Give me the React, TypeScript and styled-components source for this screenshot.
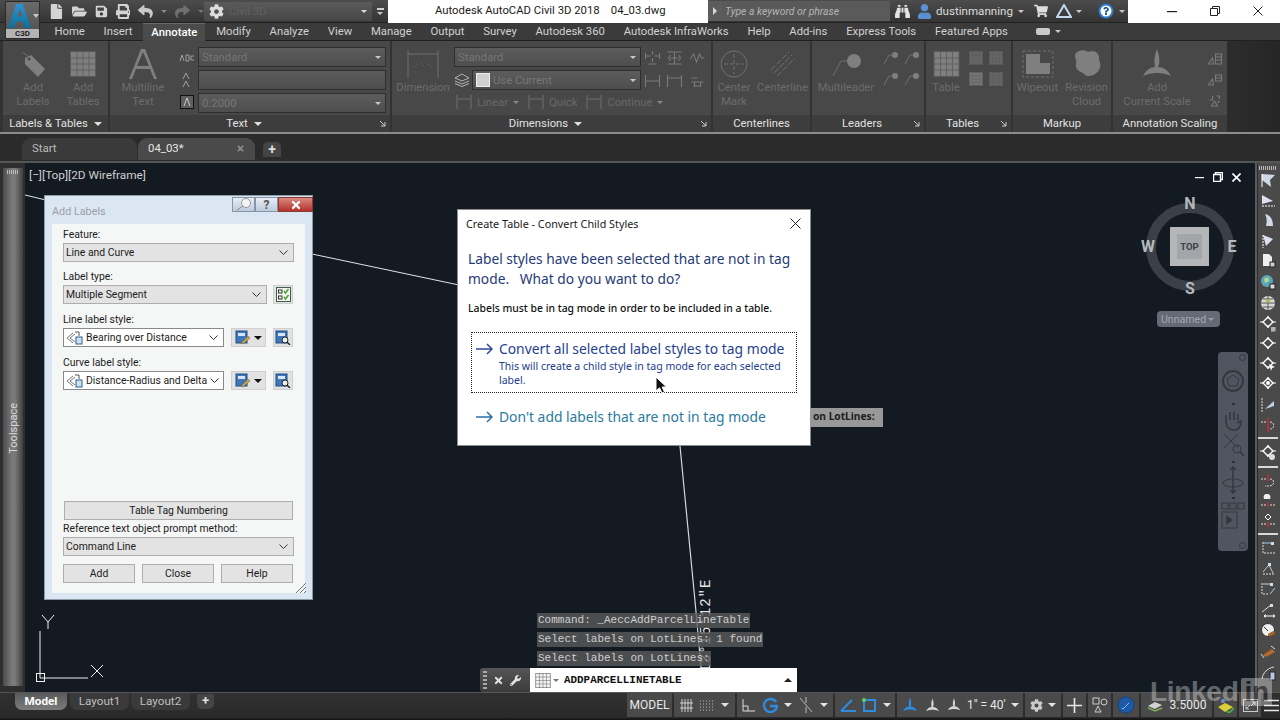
import React from "react";
import styled, { createGlobalStyle } from "styled-components";
import {
  FaBinoculars,
  FaCog,
  FaFile,
  FaFolderOpen,
  FaPrint,
  FaQuestion,
  FaReply,
  FaSave,
  FaShare,
  FaShoppingCart,
  FaTimes,
  FaUser,
  FaWrench,
} from "react-icons/fa";

const UI_FONT = `Roboto, "Open Sans", "Liberation Sans", sans-serif`;
const DLG_FONT = `"Noto Sans", "Open Sans", "Liberation Sans", sans-serif`;
const MONO_FONT = `"Liberation Mono", "DejaVu Sans Mono", monospace`;

const GlobalStyle = createGlobalStyle`
  html, body { margin: 0; padding: 0; background: #2c2c2c; }
  * { box-sizing: border-box; }
  #root { width: 1280px; height: 720px; overflow: hidden; }
`;

const Page = styled.div`
  position: relative;
  width: 1280px;
  height: 720px;
  display: flex;
  flex-direction: column;
  overflow: hidden;
  background: #2c2c2c;
  font-family: ${UI_FONT};
`;

/* ---------- title bar ---------- */

const TitleBar = styled.div`
  height: 23px;
  display: flex;
  align-items: stretch;
  background: linear-gradient(#4c4c4c, #343434);
  border-bottom: 1px solid #222;
`;

const Qat = styled.div`
  width: 204px;
  padding-left: 49px;
  display: flex;
  align-items: center;
  gap: 8px;
  color: #d4d4d4;
  font-size: 15px;
`;

const TinyCaret = styled.span<{ $c?: string }>`
  display: inline-block;
  flex: none;
  width: 0;
  height: 0;
  border-left: 3px solid transparent;
  border-right: 3px solid transparent;
  border-top: 3px solid ${(p) => p.$c || "#c8c8c8"};
`;

const WorkspaceCombo = styled.div`
  width: 168px;
  margin: 2px 0 1px;
  display: flex;
  align-items: center;
  gap: 5px;
  padding: 0 5px;
  background: linear-gradient(#5a5a5a, #474747);
  color: #616161;
  font-size: 11.3px;
  svg { color: #dcdcdc; font-size: 15px; }
  span:last-child { margin-left: auto; }
`;

const QatMenu = styled.div`
  width: 16px;
  display: flex;
  flex-direction: column;
  align-items: center;
  justify-content: center;
  gap: 2px;
  i { width: 7px; height: 2px; background: #cfcfcf; }
`;

const WhiteTitle = styled.div`
  width: 320px;
  margin-bottom: -1px;
  background: #fff;
  color: #1a1a1a;
  font-size: 11.3px;
  line-height: 22px;
  padding-left: 47px;
  white-space: pre;
`;

const SearchArrow = styled.div`
  width: 14px;
  margin: 1px 0;
  background: #5c5c5c;
  display: flex;
  align-items: center;
  justify-content: center;
  i {
    width: 0;
    height: 0;
    border-top: 4px solid transparent;
    border-bottom: 4px solid transparent;
    border-left: 4px solid #d5d5d5;
  }
`;

const SearchBox = styled.div`
  width: 168px;
  margin: 1px 0;
  background: #5a5a5a;
  color: #b4b4b4;
  font-size: 10.4px;
  font-style: italic;
  line-height: 21px;
  padding-left: 3px;
`;

const InfoCenter = styled.div`
  width: 238px;
  display: flex;
  align-items: center;
  padding-left: 5px;
  color: #dcdcdc;
  font-size: 12px;
`;

const InfoName = styled.span`
  margin: 0 5px 0 4px;
  font-size: 11.6px;
`;

const WindowBtns = styled.div`
  flex: 1;
  margin-bottom: -1px;
  background: #fff;
  display: flex;
  align-items: center;
  justify-content: flex-end;
  gap: 33px;
  padding: 0 17px 1px 0;
`;

const AppButton = styled.div`
  position: absolute;
  left: 5px;
  top: 1px;
  width: 35px;
  height: 38px;
  background: linear-gradient(#6a6a6a, #4e4e4e);
  border: 1px solid #2a2a2a;
  border-radius: 1px;
  display: flex;
  flex-direction: column;
`;

const AppLogoWrap = styled.div`
  flex: 1;
  display: flex;
  align-items: center;
  padding-left: 1px;
  gap: 0;
`;

const AppTag = styled.div`
  height: 9px;
  background: #b4b4b4;
  color: #222;
  font-size: 8px;
  font-weight: 700;
  line-height: 9px;
  text-align: center;
`;

/* ---------- ribbon ---------- */

const TabRow = styled.div`
  height: 18px;
  display: flex;
  padding-left: 45px;
  background: #3b3b3b;
  border-bottom: 1px solid #202020;
`;

const RibbonTab = styled.div<{ $active?: boolean }>`
  height: 18px;
  padding: 0 ${(p) => (p.$active ? "8px" : "9.4px")};
  margin: ${(p) => (p.$active ? "0 1.4px" : "0")};
  font-size: 11.3px;
  line-height: 18px;
  color: ${(p) => (p.$active ? "#fff" : "#d2d2d2")};
  font-weight: ${(p) => (p.$active ? 500 : 400)};
  background: ${(p) => (p.$active ? "#4b4b4b" : "transparent")};
  border-top: ${(p) => (p.$active ? "1px solid #6a6a6a" : "none")};
  white-space: nowrap;
`;

const TabExtra = styled.div`
  margin-left: 19px;
  display: flex;
  align-items: center;
  gap: 5px;
  i {
    display: block;
    width: 14px;
    height: 7px;
    background: #c8c8c8;
    border-radius: 2px;
  }
`;

const RibbonRow = styled.div`
  height: 93px;
  display: flex;
  gap: 2px;
  padding-left: 3px;
  background: linear-gradient(90deg, #333 0, #333 92%, #262626 100%);
  border-bottom: 2px solid #8b8b8b;
`;

const PanelBox = styled.div<{ $w: number }>`
  width: ${(p) => p.$w}px;
  flex: none;
  display: flex;
  flex-direction: column;
  background: #484848;
`;

const PanelBody = styled.div`
  flex: 1;
  display: flex;
  min-height: 0;
`;

const PanelFooter = styled.div<{ $launcher?: boolean }>`
  position: relative;
  height: 17px;
  flex: none;
  display: flex;
  align-items: center;
  justify-content: center;
  gap: 6px;
  padding-right: ${(p) => (p.$launcher ? 12 : 0)}px;
  background: #3d3d3d;
  color: #e2e2e2;
  font-size: 11.3px;
`;

const FootCaret = styled.span`
  width: 0;
  height: 0;
  border-left: 4px solid transparent;
  border-right: 4px solid transparent;
  border-top: 4px solid #ddd;
`;

const Launcher = styled.svg`
  position: absolute;
  right: 4px;
  top: 6px;
  width: 6px;
  height: 6px;
`;

const BigTool = styled.div<{ $w: number; $ml?: number }>`
  width: ${(p) => p.$w}px;
  margin-left: ${(p) => p.$ml || 0}px;
  flex: none;
  display: flex;
  flex-direction: column;
  align-items: center;
  padding-top: 7px;
  color: #6c6c6c;
  font-size: 11.3px;
  line-height: 14px;
  text-align: center;
`;

const BigIcon = styled.div`
  height: 32px;
  margin-bottom: 1px;
  display: flex;
  align-items: center;
  justify-content: center;
`;

const SmallGrid = styled.div<{ $cols: number; $w: number; $gap?: number }>`
  width: ${(p) => p.$w}px;
  flex: none;
  display: grid;
  grid-template-columns: repeat(${(p) => p.$cols}, 1fr);
  grid-auto-rows: 20px;
  row-gap: ${(p) => p.$gap ?? 1}px;
  justify-items: center;
  align-items: center;
  padding-top: 7px;
  align-self: flex-start;
`;

const ComboStack = styled.div<{ $w: number }>`
  width: ${(p) => p.$w}px;
  flex: none;
  display: flex;
  flex-direction: column;
  gap: 3px;
  padding-top: 6px;
`;

const DimColumn = styled.div`
  width: 187px;
  flex: none;
`;

const RibbonCombo = styled.div<{ $ml?: number }>`
  height: 20px;
  margin-left: ${(p) => p.$ml || 0}px;
  display: flex;
  align-items: center;
  padding: 0 4px 0 3px;
  background: linear-gradient(#5c5c5c, #4e4e4e);
  border: 1px solid #2e2e2e;
  color: #767676;
  font-size: 11.3px;
  span:last-child { margin-left: auto; }
`;

const ComboRow = styled.div`
  display: flex;
  align-items: center;
  gap: 2px;
  > div:last-child { flex: 1; }
`;

const Swatch = styled.i`
  width: 14px;
  height: 14px;
  margin-right: 3px;
  background: #cfcfcf;
  border: 1px solid #eee;
`;

const DimRow = styled.div`
  height: 20px;
  margin-top: 2px;
  display: flex;
  align-items: center;
  padding-left: 2px;
  color: #686868;
  font-size: 11.3px;
  white-space: nowrap;
`;

const DimItem = styled.span`
  display: inline-flex;
  align-items: center;
  gap: 5px;
  margin-right: 9px;
`;

/* ---------- file tabs ---------- */

const FileTabRow = styled.div`
  height: 29px;
  display: flex;
  align-items: flex-end;
  gap: 1px;
  padding: 0 0 1px 22px;
  background: #2b2b2b;
  border-bottom: 2px solid #555;
`;

const FileTab = styled.div<{ $active?: boolean }>`
  width: ${(p) => (p.$active ? 117 : 115)}px;
  height: 22px;
  display: flex;
  align-items: center;
  justify-content: space-between;
  padding: 0 10px 2px;
  background: ${(p) => (p.$active ? "#4a4a4a" : "#3a3a3a")};
  border-radius: 9px 9px 0 0;
  color: ${(p) => (p.$active ? "#e6e6e6" : "#bbb")};
  font-size: 11.4px;
  svg { color: #8c8c8c; font-size: 9px; }
`;

const AddTab = styled.div`
  width: 18px;
  height: 15px;
  margin: 0 0 3px 7px;
  border-radius: 5px 5px 0 0;
  background: #444;
  color: #ddd;
  font-size: 14px;
  font-weight: 700;
  line-height: 14px;
  text-align: center;
`;

/* ---------- workspace ---------- */

const Workspace = styled.div`
  flex: 1;
  min-height: 0;
  display: flex;
`;

const ToolSpaceBar = styled.div`
  width: 25px;
  flex: none;
  padding: 5px 2px 6px 3px;
  background: #2e2e2e;
  display: flex;
`;

const ToolSpaceStrip = styled.div`
  flex: 1;
  display: flex;
  flex-direction: column;
  align-items: center;
  background: linear-gradient(90deg, #4b4b4b, #7a7a7a 45%, #7a7a7a 60%, #3f3f3f);
`;

const GripDots = styled.div<{ $w: number }>`
  width: ${(p) => p.$w}px;
  height: 4px;
  margin-top: 2px;
  flex: none;
  background: repeating-linear-gradient(90deg, #bbb 0 1px, transparent 1px 2px);
`;

const ToolSpaceLabel = styled.div`
  margin-top: 229px;
  writing-mode: vertical-rl;
  transform: rotate(180deg);
  color: #d8d8d8;
  font-size: 11px;
`;

const Canvas = styled.div`
  position: relative;
  flex: 1;
  background: #131a22;
  overflow: hidden;
`;

const CadLayer = styled.svg`
  position: absolute;
  left: 0;
  top: 0;
`;

const ViewLabel = styled.div`
  position: absolute;
  left: 4px;
  top: 5px;
  color: #cfcfcf;
  font-size: 11.8px;
`;

const ViewportBtns = styled.div`
  position: absolute;
  right: 14px;
  top: 9px;
  display: flex;
  gap: 9px;
  align-items: center;
`;

const ViewCube = styled.div`
  position: absolute;
  left: 1118px;
  top: 34px;
  width: 94px;
  height: 94px;
`;

const CubeFace = styled.div`
  position: absolute;
  left: 27px;
  top: 30px;
  width: 39px;
  height: 39px;
  padding: 7px;
  background: #b4b6b8;
`;

const CubeInner = styled.div`
  width: 25px;
  height: 25px;
  background: #a2a6a9;
  color: #3b4048;
  font-size: 9.5px;
  font-weight: 700;
  line-height: 25px;
  text-align: center;
`;

const Compass = styled.span<{ $x: number; $y: number }>`
  position: absolute;
  left: ${(p) => p.$x}px;
  top: ${(p) => p.$y}px;
  width: 18px;
  color: #b6b9bc;
  font-size: 16px;
  font-weight: 700;
  line-height: 16px;
  text-align: center;
`;

const UnnamedPill = styled.div`
  position: absolute;
  left: 1132px;
  top: 148px;
  width: 63px;
  height: 16px;
  display: flex;
  align-items: center;
  justify-content: space-between;
  padding: 0 6px 0 4px;
  background: #666a75;
  border-radius: 4px;
  color: #a3a7b0;
  font-size: 10.6px;
`;

const NavBar = styled.div`
  position: absolute;
  left: 1193px;
  top: 189px;
  width: 30px;
  height: 199px;
  display: flex;
  flex-direction: column;
  align-items: center;
  padding: 14px 0 4px;
  background: #50565f;
  border-radius: 4px;
`;

const NavDot = styled.i`
  width: 3px;
  height: 2px;
  margin: 3px 0;
  background: #2c3037;
`;

const NavCorner = styled.i<{ $bottom?: boolean }>`
  position: absolute;
  right: 2px;
  ${(p) => (p.$bottom ? "bottom: 2px;" : "top: 2px;")}
  width: 7px;
  height: 7px;
  border: 1px solid #33383f;
  border-radius: 50%;
`;

/* ---------- Add Labels dialog ---------- */

const AddLabelsWindow = styled.div`
  position: absolute;
  left: 20px;
  top: 33px;
  width: 267px;
  height: 403px;
  display: flex;
  flex-direction: column;
  background: #dbe6f3;
  box-shadow: 0 0 0 1px #8e9aa6;
  font-family: ${UI_FONT};
  font-size: 10.4px;
  color: #1c1c1c;
`;

const AddLabelsTitle = styled.div`
  height: 28px;
  flex: none;
  padding: 9px 0 0 7px;
  color: #9b9fa5;
  font-size: 10.8px;
`;

const CaptionBtns = styled.div`
  position: absolute;
  right: -1px;
  top: 1px;
  height: 15px;
  display: flex;
`;

const CaptionBtn = styled.div<{ $w: number; $close?: boolean }>`
  width: ${(p) => p.$w}px;
  display: flex;
  align-items: center;
  justify-content: center;
  background: ${(p) => (p.$close ? "linear-gradient(#d98a80, #b5322a)" : "linear-gradient(#e7eef6, #bccbdb)")};
  border: 1px solid ${(p) => (p.$close ? "#8a3a34" : "#8796a6")};
  color: ${(p) => (p.$close ? "#fff" : "#555")};
  font-size: 12px;
  font-weight: 700;
`;

const AddLabelsBody = styled.div`
  flex: 1;
  margin: 0 7px 6px;
  padding: 3px 11px 10px 11px;
  background: #f5f6f6;
  display: flex;
  flex-direction: column;
`;

const FieldLabel = styled.div<{ $mt?: number }>`
  height: 15px;
  line-height: 15px;
  margin-top: ${(p) => p.$mt ?? 0}px;
  white-space: nowrap;
`;

const DlgRow = styled.div`
  height: 19px;
  margin-top: 1px;
  display: flex;
  align-items: stretch;
`;

const DlgSelect = styled.div<{ $w?: number; $white?: boolean }>`
  width: ${(p) => (p.$w ? `${p.$w}px` : "100%")};
  flex: none;
  display: flex;
  align-items: center;
  padding: 0 5px 0 2px;
  gap: 3px;
  background: ${(p) => (p.$white ? "#fff" : "#e3e3e3")};
  border: 1px solid ${(p) => (p.$white ? "#8a8a8a" : "#adadad")};
  white-space: nowrap;
  overflow: hidden;
  svg { flex: none; }
  svg:last-child { margin-left: auto; }
`;

const DlgIconBtn = styled.div<{ $w?: number; $ml: number }>`
  width: ${(p) => p.$w || 20}px;
  margin-left: ${(p) => p.$ml}px;
  flex: none;
  display: flex;
  align-items: center;
  justify-content: center;
  gap: 3px;
  background: #e2e2e2;
  border: 1px solid #cfcfcf;
`;

const DlgCaretDark = styled.i`
  width: 0;
  height: 0;
  border-left: 4px solid transparent;
  border-right: 4px solid transparent;
  border-top: 4px solid #111;
`;

const TagButton = styled.div`
  height: 19px;
  margin: auto 1px 0 1px;
  background: #e3e3e3;
  border: 1px solid #adadad;
  line-height: 17px;
  text-align: center;
`;

const DlgButtons = styled.div`
  margin-top: 8px;
  display: flex;
  gap: 7px;
`;

const DlgButton = styled.div`
  width: 72px;
  height: 19px;
  background: #e3e3e3;
  border: 1px solid #adadad;
  line-height: 17px;
  text-align: center;
`;

const ResizeGrip = styled.svg`
  position: absolute;
  right: 6px;
  bottom: 6px;
`;

/* ---------- Create Table dialog ---------- */

const TaskDialog = styled.div`
  position: absolute;
  left: 433px;
  top: 47px;
  width: 352px;
  height: 235px;
  background: #fff;
  box-shadow: 0 0 0 1px #8c8c8c;
  font-family: ${DLG_FONT};
`;

const TaskTitle = styled.div`
  height: 30px;
  padding: 6px 0 0 8px;
  color: #1a1a1a;
  font-size: 10.8px;
`;

const TaskClose = styled.svg`
  position: absolute;
  right: 9px;
  top: 8px;
`;

const TaskHeading = styled.div`
  margin: 9px 10px 0;
  color: #1f3a78;
  font-size: 13.75px;
  line-height: 20px;
  white-space: pre;
`;

const TaskText = styled.div`
  margin: 11px 10px 0;
  color: #111;
  font-size: 10.4px;
  font-weight: 500;
  line-height: 16px;
`;

const CommandLink = styled.div<{ $focus?: boolean }>`
  display: flex;
  gap: 6px;
  margin: ${(p) => (p.$focus ? "16px 13px 0" : "9px 13px 0")};
  padding: ${(p) => (p.$focus ? "6px 4px 2px" : "4px 4px")};
  min-height: ${(p) => (p.$focus ? "61px" : "auto")};
  border: 1px ${(p) => (p.$focus ? "dotted #222" : "solid transparent")};
`;

const LinkTitle = styled.div<{ $c: string }>`
  color: ${(p) => p.$c};
  font-size: 13.85px;
  line-height: 20px;
  white-space: nowrap;
`;

const LinkSub = styled.div`
  color: #23408e;
  font-size: 10.5px;
  line-height: 14px;
`;

const ArrowBox = styled.svg`
  flex: none;
  margin-top: 4px;
`;

const Pointer = styled.svg`
  position: absolute;
  left: 630px;
  top: 213px;
`;

const OnLotLines = styled.div`
  position: absolute;
  left: 785px;
  top: 245px;
  width: 73px;
  height: 19px;
  padding-left: 3px;
  background: #989898;
  color: #1d1d1d;
  font-family: ${DLG_FONT};
  font-size: 10.2px;
  font-weight: 700;
  line-height: 16px;
`;

/* ---------- command line ---------- */

const BearingText = styled.div`
  position: absolute;
  left: 673px;
  top: 519px;
  transform: rotate(-90deg);
  transform-origin: left top;
  color: #e6e6e6;
  font-family: ${MONO_FONT};
  font-size: 14px;
  line-height: 16px;
  letter-spacing: 1px;
  white-space: pre;
`;

const History = styled.div`
  position: absolute;
  left: 512px;
  top: 450px;
  display: flex;
  flex-direction: column;
  align-items: flex-start;
  gap: 4px;
`;

const HistoryLine = styled.div`
  height: 15px;
  padding: 0 1px;
  background: rgba(92, 92, 92, 0.78);
  color: #cfcfcf;
  font-family: ${MONO_FONT};
  font-size: 11px;
  line-height: 15px;
  white-space: pre;
`;

const CommandBar = styled.div`
  position: absolute;
  left: 455px;
  top: 505px;
  width: 317px;
  height: 24px;
  display: flex;
`;

const CommandTools = styled.div`
  width: 50px;
  display: flex;
  align-items: center;
  gap: 6px;
  padding-left: 3px;
  background: linear-gradient(#555, #3c3c3c);
  border-radius: 3px 0 0 3px;
  color: #e4e4e4;
  font-size: 11px;
`;

const CommandGrip = styled.i`
  width: 4px;
  height: 18px;
  background: repeating-linear-gradient(#aaa 0 2px, transparent 2px 4px);
`;

const CommandInput = styled.div`
  flex: 1;
  display: flex;
  align-items: center;
  padding: 0 4px 0 5px;
  background: #fff;
  color: #111;
  font-family: ${MONO_FONT};
  font-size: 10.9px;
  font-weight: 700;
`;

const CommandText = styled.span`
  margin: 0 auto 0 5px;
`;

const UpCaret = styled.i`
  width: 0;
  height: 0;
  margin-right: 1px;
  border-left: 4px solid transparent;
  border-right: 4px solid transparent;
  border-bottom: 4px solid #222;
`;

/* ---------- right tool bar ---------- */

const RightBar = styled.div`
  width: 25px;
  flex: none;
  display: flex;
  flex-direction: column;
  align-items: center;
  padding: 1px 1px 0 0;
  background: #4a4a4a;
  border-left: 2px solid #5a5a5a;
  box-shadow: inset 1px 0 0 #2c2c2c;
`;

const RightSlot = styled.div<{ $h: number }>`
  height: ${(p) => p.$h}px;
  flex: none;
  display: flex;
  align-items: center;
  justify-content: center;
`;

const RightSep = styled.div`
  width: 20px;
  height: 2px;
  flex: none;
  margin: 3px 0;
  background: #d8d8d8;
`;

/* ---------- status bar ---------- */

const StatusBar = styled.div`
  height: 28px;
  flex: none;
  display: flex;
  align-items: flex-start;
  background: linear-gradient(#303030, #2a2a2a 90%, #111);
  border-top: 1px solid #555;
`;

const LayoutTabs = styled.div`
  width: 627px;
  flex: none;
  display: flex;
  align-items: center;
  padding: 0 0 0 15px;
  height: 17px;
`;

const LayoutTab = styled.div<{ $active?: boolean }>`
  width: ${(p) => (p.$active ? 52 : 59)}px;
  height: 17px;
  margin-right: ${(p) => (p.$active ? 3 : 2)}px;
  background: ${(p) => (p.$active ? "linear-gradient(#5a5a5a, #7c7c7c)" : "#3a3a3a")};
  border-radius: 0 0 7px 7px;
  color: ${(p) => (p.$active ? "#fff" : "#bfbfbf")};
  font-size: 11.7px;
  font-weight: ${(p) => (p.$active ? 700 : 400)};
  line-height: 16px;
  text-align: center;
`;

const AddLayout = styled.div`
  width: 17px;
  height: 15px;
  margin-left: 5px;
  border-radius: 0 0 5px 5px;
  background: #444;
  color: #e0e0e0;
  font-size: 13px;
  font-weight: 700;
  line-height: 13px;
  text-align: center;
`;

const StatusGroup = styled.div<{ $w: number }>`
  width: ${(p) => p.$w}px;
  height: 24px;
  flex: none;
  margin-right: 2px;
  display: flex;
  align-items: center;
  justify-content: space-around;
  padding: 0 2px;
  background: #4a4a4a;
  color: #e8e8e8;
  font-size: 12px;
  white-space: nowrap;
`;

const StatusCaret = styled.i`
  width: 0;
  height: 0;
  border-left: 4px solid transparent;
  border-right: 4px solid transparent;
  border-top: 4px solid #e4e4e4;
`;

const Watermark = styled.div`
  position: absolute;
  left: 1150px;
  top: 678px;
  display: flex;
  align-items: center;
  gap: 3px;
  opacity: 0.33;
  color: #fff;
  font-family: "Liberation Sans", sans-serif;
  font-size: 28px;
  font-weight: 700;
  line-height: 28px;
  letter-spacing: -0.3px;
  pointer-events: none;
`;

const WatermarkIn = styled.span`
  padding: 0 3px;
  background: #fff;
  color: #333;
  border-radius: 2px;
`;

/* ---------- drawings ---------- */

const G = "#6f6f6f";
const G2 = "#7f7f7f";

const TagIcon = () => (
  <svg width="28" height="30" viewBox="0 0 28 30">
    <path d="M3 3l6 4" stroke={G} fill="none" />
    <path d="M6 9l6-3 14 14-7 8L6 15z" fill={G2} />
    <circle cx="10" cy="10" r="1.5" fill="#484848" />
  </svg>
);

const GridIcon = ({ w = 26, h = 26, c = G2 }: { w?: number; h?: number; c?: string }) => (
  <svg width={w} height={h} viewBox="0 0 26 26">
    <rect x="0.5" y="0.5" width="25" height="25" fill={c} stroke="#5a5a5a" />
    <path d="M0 7h26M0 13h26M0 19h26M7 0v26M13 0v26M19 0v26" stroke="#5a5a5a" strokeWidth="0.8" />
  </svg>
);

const dimGlyphs = [
  "M1 6h5M10 6h5M8 1v4M8 8v4M1 3v6M15 3v6M4 14h8",
  "M1 2h14M1 14h14M4 8h8M8 2v12M4 5l-2 3 2 3M12 5l2 3-2 3",
  "M1 9l3-5 3 8 3-8 2 4h3",
  "M1 2v12M15 2v12M1 8h14",
  "M1 2v12M15 2v12M1 5h14",
  "M2 5h6M2 9h12M4 13h8M5 9v5M11 9v5",
];

const DimGlyph = ({ kind }: { kind: number }) => (
  <svg width="17" height="16" viewBox="0 0 16 16">
    <path d={dimGlyphs[kind]} fill="none" stroke="#7a7a7a" strokeWidth="1.1" />
  </svg>
);

const ScaleGlyph = ({ kind }: { kind: number }) => {
  const p = ["M2 14l4-6 1 6zM9 4h6v10H9zM9 7h6M9 10h6", "M2 14l4-6 1 6zM9 4h6v6H9zM9 7h6", "M3 8h3V4M10 4h3v3M8 9l-3 5h6zM13 9l-2 2"];
  return (
    <svg width="17" height="16" viewBox="0 0 16 16">
      <path d={p[kind]} fill="none" stroke="#7a7a7a" strokeWidth="1.1" />
    </svg>
  );
};

const DimBracket = () => (
  <svg width="16" height="16" viewBox="0 0 16 16">
    <path d="M1 1v14M15 1v14M2 5h12" fill="none" stroke={G} />
  </svg>
);

const LeaderDot = () => (
  <svg width="18" height="18" viewBox="0 0 18 18">
    <path d="M2 15l5-9h4" fill="none" stroke={G} />
    <circle cx="13" cy="6" r="3" fill={G2} />
  </svg>
);

const ScaleAxis = ({ s = 36, c = G2 }: { s?: number; c?: string }) => (
  <svg width={s} height={s} viewBox="0 0 36 36">
    <path d="M18 3c3 8 3 14 1 18 5 0 10 3 13 9-7-3-11-3-14-3-3 0-7 0-14 3 3-6 8-9 12-9-1-5-1-10 2-18z" fill={c} />
  </svg>
);

const AppLogo = () => (
  <svg width="27" height="26" viewBox="0 0 25 25">
    <defs>
      <linearGradient id="acadA" x1="0" y1="0" x2="0" y2="1">
        <stop offset="0" stopColor="#2d93d6" />
        <stop offset="1" stopColor="#0c6f9a" />
      </linearGradient>
    </defs>
    <path d="M9 1h6l8 23h-6l-1.7-6H8.5L6.8 24H1zM10 13h5l-2.5-8z" fill="url(#acadA)" fillRule="evenodd" />
  </svg>
);

const Minimize = ({ c = "#222", w = 10 }: { c?: string; w?: number }) => (
  <svg width={w} height="3" viewBox={`0 0 ${w} 3`}>
    <rect y="1" width={w} height="1.2" fill={c} />
  </svg>
);

const Restore = ({ c = "#222", sw = 1 }: { c?: string; sw?: number }) => (
  <svg width="10" height="10" viewBox="0 0 10 10">
    <path d="M2.5 2.5V.5h7v7h-2M.5 2.5h7v7h-7z" fill="none" stroke={c} strokeWidth={sw} />
  </svg>
);

const CloseX = ({ c = "#222", s = 10, sw = 1 }: { c?: string; s?: number; sw?: number }) => (
  <svg width={s} height={s} viewBox="0 0 10 10">
    <path d="M.5.5l9 9M9.5.5l-9 9" stroke={c} strokeWidth={sw} fill="none" />
  </svg>
);

const Chevron = () => (
  <svg width="9" height="5" viewBox="0 0 9 5">
    <path d="M.5.5l4 4 4-4" fill="none" stroke="#333" />
  </svg>
);

const StyleIcon = () => (
  <svg width="17" height="14" viewBox="0 0 17 14">
    <path d="M1 7l6-5M1 7l6 5M4 7l5-4M4 7l5 4" stroke="#777" fill="none" />
    <rect x="10" y="6" width="6" height="7" fill="#cfe0ee" stroke="#2a5f8f" />
    <path d="M9 1h4v4" stroke="#555" fill="none" />
  </svg>
);

const EditStyleIcon = () => (
  <svg width="16" height="15" viewBox="0 0 16 15">
    <rect x="1" y="1" width="11" height="12" fill="#3f78ba" stroke="#1e4a80" />
    <rect x="3" y="3" width="7" height="3" fill="#d7e5f3" />
    <path d="M6 13l7-7 2 2-7 6z" fill="#c9a73d" stroke="#555" strokeWidth="0.5" />
  </svg>
);

const ViewStyleIcon = () => (
  <svg width="16" height="15" viewBox="0 0 16 15">
    <rect x="1" y="1" width="11" height="12" fill="#3f78ba" stroke="#1e4a80" />
    <rect x="3" y="3" width="7" height="3" fill="#d7e5f3" />
    <circle cx="10" cy="10" r="3" fill="#eee" stroke="#222" />
    <path d="M12 12l3 3" stroke="#222" strokeWidth="1.4" />
  </svg>
);

const TypeIcon = () => (
  <svg width="15" height="15" viewBox="0 0 15 15">
    <rect x="0.5" y="0.5" width="14" height="14" fill="#f3f6ee" stroke="#3e5f4a" />
    <rect x="2.5" y="3" width="3.5" height="3" fill="none" stroke="#333" />
    <rect x="2.5" y="9" width="3.5" height="3" fill="none" stroke="#333" />
    <path d="M8 4l1.5 2 3-4M8 10l1.5 2 3-4" stroke="#3da32d" strokeWidth="1.4" fill="none" />
  </svg>
);

const LauncherMark = () => (
  <Launcher viewBox="0 0 6 6">
    <path d="M0 0l5 5M5 1v4H1" stroke="#ccc" fill="none" />
  </Launcher>
);

/* right bar glyphs, one drawing per kind */
const RightGlyph = ({ kind }: { kind: string }) => {
  const snap = (
    <>
      <path d="M8 1l5 5-5 5-5-5z" fill="none" stroke="#fff" strokeWidth="1.4" />
      <path d="M8 0v3M8 9v3M0 6h3M13 6h3" stroke="#fff" />
    </>
  );
  let body: React.ReactNode = null;
  if (kind === "view1") body = <><path d="M2 2l13 1-5 5 1 7-9-7z" fill="#cfd8e6" /><path d="M2 2v13" stroke="#fff" /></>;
  if (kind === "view2") body = <><path d="M2 3l11 6-11 3z" fill="#dce3ee" /><path d="M2 14h13" stroke="#fff" strokeDasharray="2 1" /></>;
  if (kind === "view3") body = <path d="M5 2c6 1 8 6 8 12H6c1-4 1-8-1-12z" fill="#d0d8e4" />;
  if (kind === "view4") body = <><path d="M3 2l10 4-7 7z" fill="#dbe2ec" /><path d="M3 2v13" stroke="#fff" strokeDasharray="2 1" /></>;
  if (kind === "doc") body = <><path d="M3 1h6l3 3v9H3z" fill="#eee" /><rect x="10" y="9" width="5" height="5" fill="#ccc" stroke="#222" /></>;
  if (kind === "globe") body = <><circle cx="7" cy="7" r="6" fill="#5ba7b8" /><path d="M4 5l4-2 1 4-4 2z" fill="#b9d88f" /><rect x="10" y="10" width="5" height="5" fill="#ddd" stroke="#222" /></>;
  if (kind === "globe2") body = <><circle cx="8" cy="8" r="7" fill="#d8d8d8" /><path d="M1 8h14M8 1v14M3 4h10M3 12h10" stroke="#555" fill="none" /><circle cx="8" cy="6" r="2" fill="#9bbf4a" /></>;
  if (kind.startsWith("snap")) {
    body = <>{snap}{kind === "snapHash" && <path d="M11 12h5M11 14h5M12 11v5M14 11v5" stroke="#fff" strokeWidth="0.7" />}{kind === "snapDot" && <circle cx="8" cy="6" r="2" fill="#fff" />}{kind === "snapCur" && <path d="M9 7l6 3-3 1-1 3z" fill="#fff" />}{kind === "snapBall" && <circle cx="12" cy="12" r="3" fill="#ddd" />}</>;
  }
  if (kind === "ortho") body = <><path d="M2 1v14" stroke="#ddd" strokeDasharray="2 1" /><path d="M5 12l9-8v5z" fill="#bcd2e8" /></>;
  if (kind === "rod") body = <><rect x="7" y="1" width="2" height="14" fill="#a33" /><path d="M1 5h5M10 5c5 0 5 7 0 7" stroke="#ddd" fill="none" strokeDasharray="2 1" /></>;
  if (kind === "rodDown") body = <><path d="M8 1v7" stroke="#a33" strokeWidth="2" /><path d="M1 6h5M10 6c5 0 5 7-1 7H5" stroke="#ddd" fill="none" strokeDasharray="2 1" /></>;
  if (kind === "rodSmall") body = <><path d="M7 1c3 0 4 2 3 5H4c-1-3 0-5 3-5z" fill="#eee" /><path d="M1 12h14" stroke="#ddd" strokeDasharray="2 1" /><path d="M8 9v5" stroke="#a33" strokeWidth="2" /></>;
  if (kind === "rodSnap") body = <><path d="M8 1l3 3-3 3-3-3z" fill="none" stroke="#fff" /><path d="M1 11h14" stroke="#ddd" strokeDasharray="2 1" /><path d="M8 9v5" stroke="#a33" strokeWidth="2" /></>;
  if (kind === "dim1") body = <><path d="M3 2v11h12" stroke="#ddd" strokeDasharray="2 1" fill="none" /><path d="M3 3h10" stroke="#aac4e0" /><rect x="11" y="2" width="3" height="3" fill="#cde" /></>;
  if (kind === "dim2") body = <><path d="M3 14h12" stroke="#ddd" strokeDasharray="2 1" /><path d="M3 12L9 5 13 13" stroke="#bcd" fill="none" /><rect x="8" y="3" width="3" height="3" fill="#cde" /></>;
  if (kind === "dim3") body = <><path d="M2 2v11h6" stroke="#ddd" strokeDasharray="2 1" fill="none" /><path d="M3 3h8M15 7l-5 6" stroke="#bcd" /><rect x="10" y="2" width="3" height="3" fill="#cde" /></>;
  if (kind === "dim4") body = <><path d="M2 10L11 3" stroke="#ddd" /><rect x="10" y="2" width="3" height="3" fill="#cde" /><path d="M4 14h11M4 14l2-1.5M4 14l2 1.5M15 14l-2-1.5M15 14l-2 1.5" stroke="#fff" /></>;
  if (kind === "gauge") body = <><circle cx="8" cy="7" r="6.5" fill="#eee" stroke="#333" /><path d="M4 4l4 4" stroke="#333" /><path d="M8 13c3 0 7-1 7-4l-2-1-5 3z" fill="#a8642a" /></>;
  if (kind === "tape") body = <><path d="M3 11l9-6 3 3-9 5z" fill="#b8692a" /><path d="M1 10l3 4M11 2l4 3" stroke="#ddd" /></>;
  if (kind === "curve") body = <><path d="M2 14C3 7 8 3 14 2" stroke="#ddd" fill="none" /><rect x="10" y="7" width="5" height="8" fill="#b8c9de" stroke="#223" /></>;
  return (
    <svg width="16" height="16" viewBox="0 0 16 16">
      {body}
    </svg>
  );
};

const rightTools: { kind: string; h: number }[] = [
  { kind: "view1", h: 20 }, { kind: "view2", h: 20 }, { kind: "view3", h: 20 }, { kind: "view4", h: 21 },
  { kind: "doc", h: 20 }, { kind: "globe", h: 21 }, { kind: "globe2", h: 21 }, { kind: "snapHash", h: 21 },
  { kind: "snap", h: 21 }, { kind: "snapCur", h: 20 }, { kind: "snapDot", h: 20 }, { kind: "ortho", h: 20 },
  { kind: "rod", h: 19 }, { kind: "sep", h: 0 }, { kind: "snapBall", h: 21 }, { kind: "sep", h: 0 },
  { kind: "rodDown", h: 20 }, { kind: "rodSmall", h: 20 }, { kind: "rodSnap", h: 19 }, { kind: "sep", h: 0 },
  { kind: "dim1", h: 20 }, { kind: "dim2", h: 20 }, { kind: "dim3", h: 21 }, { kind: "dim4", h: 21 },
  { kind: "gauge", h: 21 }, { kind: "tape", h: 21 }, { kind: "curve", h: 22 },
];

const ribbonTabs = [
  "Home", "Insert", "Annotate", "Modify", "Analyze", "View", "Manage", "Output", "Survey",
  "Autodesk 360", "Autodesk InfraWorks", "Help", "Add-ins", "Express Tools", "Featured Apps",
];

const Panel = ({ w, title, caret, launcher, children }: { w: number; title: string; caret?: boolean; launcher?: boolean; children: React.ReactNode }) => (
  <PanelBox $w={w}>
    <PanelBody>{children}</PanelBody>
    <PanelFooter $launcher={launcher}>
      {title}
      {caret && <FootCaret />}
      {launcher && <LauncherMark />}
    </PanelFooter>
  </PanelBox>
);

export default function App() {
  return (
    <Page>
      <GlobalStyle />

      <TitleBar>
        <Qat>
          <FaFile />
          <FaFolderOpen />
          <FaSave style={{ fontSize: 13 }} />
          <FaPrint />
          <FaReply style={{ color: "#c9c9c9" }} />
          <TinyCaret $c="#888" />
          <FaShare style={{ color: "#6e6e6e" }} />
          <TinyCaret $c="#777" />
        </Qat>
        <WorkspaceCombo>
          <FaCog />
          Civil 3D
          <TinyCaret $c="#ddd" />
        </WorkspaceCombo>
        <QatMenu>
          <i />
          <TinyCaret />
        </QatMenu>
        <WhiteTitle>{"Autodesk AutoCAD Civil 3D 2018    04_03.dwg"}</WhiteTitle>
        <SearchArrow>
          <i />
        </SearchArrow>
        <SearchBox>Type a keyword or phrase</SearchBox>
        <InfoCenter>
          <FaBinoculars style={{ fontSize: 15, marginRight: 7, color: "#e4e4e4" }} />
          <FaUser style={{ fontSize: 15, color: "#5a8fd0" }} />
          <InfoName>dustinmanning</InfoName>
          <TinyCaret />
          <FaShoppingCart style={{ fontSize: 14, margin: "0 8px 0 10px", color: "#ddd" }} />
          <svg width="16" height="14" viewBox="0 0 16 14">
            <path d="M8 1l7 12H1z" fill="none" stroke="#c5d6ef" strokeWidth="2" />
          </svg>
          <TinyCaret style={{ margin: "0 16px 0 4px" }} />
          <svg width="16" height="16" viewBox="0 0 16 16">
            <circle cx="8" cy="8" r="7.5" fill="#2f7bd0" />
            <circle cx="8" cy="8" r="5.5" fill="#fff" />
            <foreignObject width="16" height="16">
              <FaQuestion style={{ color: "#1c4f92", fontSize: 8, margin: "4px" }} />
            </foreignObject>
          </svg>
          <TinyCaret style={{ marginLeft: 5 }} />
        </InfoCenter>
        <WindowBtns>
          <Minimize w={10} />
          <Restore />
          <CloseX s={10} />
        </WindowBtns>
      </TitleBar>

      <AppButton>
        <AppLogoWrap>
          <AppLogo />
          <TinyCaret style={{ borderLeftWidth: 3, borderRightWidth: 3, borderTopWidth: 4 }} />
        </AppLogoWrap>
        <AppTag>C3D</AppTag>
      </AppButton>

      <TabRow>
        {ribbonTabs.map((t) => (
          <RibbonTab key={t} $active={t === "Annotate"}>
            {t}
          </RibbonTab>
        ))}
        <TabExtra>
          <i />
          <TinyCaret />
        </TabExtra>
      </TabRow>

      <RibbonRow>
        <Panel w={105} title="Labels & Tables" caret>
          <BigTool $w={52} $ml={4}>
            <BigIcon>
              <TagIcon />
            </BigIcon>
            Add
            <br />
            Labels
          </BigTool>
          <BigTool $w={48}>
            <BigIcon>
              <GridIcon />
            </BigIcon>
            Add
            <br />
            Tables
          </BigTool>
        </Panel>

        <Panel w={280} title="Text" caret launcher>
          <BigTool $w={66}>
            <BigIcon>
              <svg width="30" height="32" viewBox="0 0 30 32">
                <path d="M13 1h4l12 30h-3l-4-10H8L4 31H1zM9 18h12L15 4z" fill={G2} fillRule="evenodd" />
              </svg>
            </BigIcon>
            Multiline
            <br />
            Text
          </BigTool>
          <SmallGrid $cols={1} $w={22} $gap={2}>
            <svg width="16" height="10" viewBox="0 0 16 10">
              <path d="M1 8l2-6 2 6M7 2h3v6H7zM15 3h-3v4h3" fill="none" stroke="#a0a0a0" />
            </svg>
            <svg width="10" height="16" viewBox="0 0 10 16">
              <path d="M1 7l3-6 3 6M1 15l3-6 3 6" fill="none" stroke="#a0a0a0" />
            </svg>
            <svg width="14" height="14" viewBox="0 0 14 14">
              <rect x="0.5" y="0.5" width="13" height="13" fill="#5f5f5f" stroke="#111" />
              <path d="M4 11l3-8 3 8" stroke="#ccc" fill="none" />
            </svg>
          </SmallGrid>
          <ComboStack $w={188}>
            <RibbonCombo>
              Standard
              <TinyCaret />
            </RibbonCombo>
            <RibbonCombo />
            <RibbonCombo>
              0.2000
              <TinyCaret />
            </RibbonCombo>
          </ComboStack>
        </Panel>

        <Panel w={319} title="Dimensions" caret launcher>
          <BigTool $w={62}>
            <BigIcon>
              <svg width="34" height="30" viewBox="0 0 34 30">
                <path d="M2 1v28M32 1v28M2 5h30" stroke={G} fill="none" />
                <path d="M9 18l3-3M15 14l3 3M22 15l3 3" stroke={G} strokeDasharray="1 2" />
              </svg>
            </BigIcon>
            Dimension
          </BigTool>
          <DimColumn>
            <ComboStack $w={187}>
              <RibbonCombo>
                Standard
                <TinyCaret />
              </RibbonCombo>
              <ComboRow>
                <svg width="16" height="14" viewBox="0 0 16 14">
                  <path d="M1 5l7-4 7 4-7 3zM1 8l7 3 7-3M1 10.5l7 3 7-3" fill="none" stroke="#b5b5b5" />
                </svg>
                <RibbonCombo>
                  <Swatch />
                  Use Current
                  <TinyCaret />
                </RibbonCombo>
              </ComboRow>
            </ComboStack>
            <DimRow>
              <DimItem>
                <DimBracket />
                Linear
                <TinyCaret $c="#888" />
              </DimItem>
              <DimItem>
                <DimBracket />
                Quick
              </DimItem>
              <DimItem>
                <DimBracket />
                Continue
                <TinyCaret $c="#888" />
              </DimItem>
            </DimRow>
          </DimColumn>
          <SmallGrid $cols={3} $w={68} $gap={3}>
            <DimGlyph kind={0} />
            <DimGlyph kind={1} />
            <DimGlyph kind={2} />
            <DimGlyph kind={3} />
            <DimGlyph kind={4} />
            <DimGlyph kind={5} />
          </SmallGrid>
        </Panel>

        <Panel w={97} title="Centerlines">
          <BigTool $w={42}>
            <BigIcon>
              <svg width="28" height="28" viewBox="0 0 28 28">
                <circle cx="14" cy="14" r="13" fill="none" stroke={G} />
                <path d="M14 4v20M4 14h20" stroke={G} strokeDasharray="4 2" />
              </svg>
            </BigIcon>
            Center
            <br />
            Mark
          </BigTool>
          <BigTool $w={55}>
            <BigIcon>
              <svg width="28" height="28" viewBox="0 0 28 28">
                <path d="M2 20L20 2M8 26L26 8M5 23L23 5" stroke={G} strokeDasharray="6 2" />
              </svg>
            </BigIcon>
            Centerline
          </BigTool>
        </Panel>

        <Panel w={112} title="Leaders" launcher>
          <BigTool $w={68}>
            <BigIcon>
              <svg width="34" height="30" viewBox="0 0 34 30">
                <path d="M4 27l8-15h8" stroke={G} fill="none" />
                <circle cx="25" cy="12" r="7" fill={G2} />
              </svg>
            </BigIcon>
            Multileader
          </BigTool>
          <SmallGrid $cols={2} $w={42}>
            <LeaderDot />
            <LeaderDot />
            <LeaderDot />
            <LeaderDot />
          </SmallGrid>
        </Panel>

        <Panel w={85} title="Tables" launcher>
          <BigTool $w={40}>
            <BigIcon>
              <GridIcon w={27} h={26} />
            </BigIcon>
            Table
          </BigTool>
          <SmallGrid $cols={2} $w={40}>
            <GridIcon w={14} h={14} c="#666" />
            <GridIcon w={14} h={14} c="#666" />
            <GridIcon w={14} h={14} c="#777" />
            <GridIcon w={14} h={14} c="#666" />
          </SmallGrid>
        </Panel>

        <Panel w={98} title="Markup">
          <BigTool $w={49}>
            <BigIcon>
              <svg width="32" height="28" viewBox="0 0 32 28">
                <rect x="1" y="1" width="30" height="26" fill="none" stroke={G} strokeDasharray="3 2" />
                <path d="M4 4h14v9h10v11H4z" fill={G2} />
              </svg>
            </BigIcon>
            Wipeout
          </BigTool>
          <BigTool $w={49}>
            <BigIcon>
              <svg width="30" height="28" viewBox="0 0 30 28">
                <path d="M7 1c5-2 9 1 9 1s6-2 9 1 2 7 2 7 3 5 0 10-8 6-11 6-4-3-7-4-6-4-5-8-1-5-1-8 2-4 4-5z" fill={G2} />
              </svg>
            </BigIcon>
            Revision
            <br />
            Cloud
          </BigTool>
        </Panel>

        <Panel w={114} title="Annotation Scaling">
          <BigTool $w={88}>
            <BigIcon>
              <ScaleAxis />
            </BigIcon>
            Add
            <br />
            Current Scale
          </BigTool>
          <SmallGrid $cols={1} $w={26}>
            <ScaleGlyph kind={0} />
            <ScaleGlyph kind={1} />
            <ScaleGlyph kind={2} />
          </SmallGrid>
        </Panel>
      </RibbonRow>

      <FileTabRow>
        <FileTab>Start</FileTab>
        <FileTab $active>
          04_03*
          <FaTimes />
        </FileTab>
        <AddTab>+</AddTab>
      </FileTabRow>

      <Workspace>
        <ToolSpaceBar>
          <ToolSpaceStrip>
            <GripDots $w={12} />
            <ToolSpaceLabel>Toolspace</ToolSpaceLabel>
          </ToolSpaceStrip>
        </ToolSpaceBar>

        <Canvas>
          <CadLayer width="1230" height="530" viewBox="0 0 1230 530">
            <path d="M0 32l25 6M287 91l147 31" stroke="#e4e4e4" fill="none" />
            <path d="M655 283l15 155 6 66" stroke="#d8d8d8" strokeWidth="1.2" fill="none" />
            {/* UCS icon */}
            <path d="M15 468v47M15 515h48" stroke="#f0f0f0" fill="none" />
            <rect x="11.5" y="510.5" width="8" height="8" fill="none" stroke="#f0f0f0" />
            <path d="M17 452l6 7 6-7M23 459v7M66 502l12 12M78 502l-12 12" stroke="#f0f0f0" fill="none" />
          </CadLayer>

          <ViewLabel>[−][Top][2D Wireframe]</ViewLabel>
          <ViewportBtns>
            <Minimize c="#fff" w={9} />
            <Restore c="#fff" sw={1.4} />
            <CloseX c="#fff" s={9} sw={1.8} />
          </ViewportBtns>

          <ViewCube>
            <svg width="94" height="94" viewBox="0 0 94 94">
              <circle cx="47" cy="50" r="39" fill="none" stroke="#3a3f48" strokeWidth="10" />
            </svg>
            <CubeFace>
              <CubeInner>TOP</CubeInner>
            </CubeFace>
            <Compass $x={38} $y={-1}>N</Compass>
            <Compass $x={38} $y={84}>S</Compass>
            <Compass $x={-4} $y={42}>W</Compass>
            <Compass $x={80} $y={42}>E</Compass>
          </ViewCube>

          <UnnamedPill>
            Unnamed
            <TinyCaret $c="#9a9ea8" />
          </UnnamedPill>

          <NavBar>
            <NavCorner />
            <svg width="24" height="34" viewBox="0 0 24 34">
              <circle cx="12" cy="15" r="10" fill="none" stroke="#33383f" strokeWidth="2" />
              <path d="M12 9l6 4-2 7H8l-2-7z" fill="none" stroke="#33383f" />
            </svg>
            <NavDot />
            <svg width="24" height="24" viewBox="0 0 24 24">
              <path d="M5 13V7M9 12V4M13 12V4M17 12V6M5 13c0 6 3 9 8 9s7-4 7-9l-4 2" fill="none" stroke="#33383f" strokeWidth="1.6" />
            </svg>
            <svg width="24" height="26" viewBox="0 0 24 26">
              <path d="M3 2l14 14M17 2L3 16" stroke="#33383f" />
              <circle cx="16" cy="17" r="4" fill="none" stroke="#33383f" />
              <path d="M19 20l4 4" stroke="#33383f" strokeWidth="1.6" />
            </svg>
            <NavDot />
            <svg width="24" height="28" viewBox="0 0 24 28">
              <ellipse cx="12" cy="17" rx="10" ry="4" fill="none" stroke="#33383f" />
              <path d="M12 1v26M9 4l3-3 3 3M9 24l3 3 3-3" stroke="#33383f" fill="none" strokeWidth="1.4" />
            </svg>
            <NavDot />
            <svg width="24" height="30" viewBox="0 0 24 30">
              <rect x="1" y="1" width="6" height="6" fill="none" stroke="#33383f" />
              <rect x="9" y="1" width="6" height="6" fill="none" stroke="#33383f" />
              <rect x="17" y="1" width="6" height="6" fill="none" stroke="#33383f" />
              <rect x="1" y="10" width="15" height="16" fill="none" stroke="#33383f" />
              <path d="M5 13l7 5-7 5z" fill="#33383f" />
            </svg>
            <NavCorner $bottom />
          </NavBar>

          <AddLabelsWindow>
            <AddLabelsTitle>Add Labels</AddLabelsTitle>
            <CaptionBtns>
              <CaptionBtn $w={23}>
                <svg width="16" height="13" viewBox="0 0 16 13">
                  <circle cx="10" cy="5" r="4.5" fill="#f4f4f4" stroke="#999" />
                  <path d="M7 8l-6 4" stroke="#888" />
                </svg>
              </CaptionBtn>
              <CaptionBtn $w={23}>?</CaptionBtn>
              <CaptionBtn $w={35} $close>
                <FaTimes />
              </CaptionBtn>
            </CaptionBtns>
            <AddLabelsBody>
              <FieldLabel>Feature:</FieldLabel>
              <DlgRow>
                <DlgSelect>
                  Line and Curve
                  <Chevron />
                </DlgSelect>
              </DlgRow>
              <FieldLabel $mt={7}>Label type:</FieldLabel>
              <DlgRow>
                <DlgSelect $w={204}>
                  Multiple Segment
                  <Chevron />
                </DlgSelect>
                <DlgIconBtn $ml={6}>
                  <TypeIcon />
                </DlgIconBtn>
              </DlgRow>
              <FieldLabel $mt={8}>Line label style:</FieldLabel>
              <DlgRow>
                <DlgSelect $w={161} $white>
                  <StyleIcon />
                  Bearing over Distance
                  <Chevron />
                </DlgSelect>
                <DlgIconBtn $ml={7} $w={35}>
                  <EditStyleIcon />
                  <DlgCaretDark />
                </DlgIconBtn>
                <DlgIconBtn $ml={7}>
                  <ViewStyleIcon />
                </DlgIconBtn>
              </DlgRow>
              <FieldLabel $mt={8}>Curve label style:</FieldLabel>
              <DlgRow>
                <DlgSelect $w={161} $white>
                  <StyleIcon />
                  Distance-Radius and Delta
                  <Chevron />
                </DlgSelect>
                <DlgIconBtn $ml={7} $w={35}>
                  <EditStyleIcon />
                  <DlgCaretDark />
                </DlgIconBtn>
                <DlgIconBtn $ml={7}>
                  <ViewStyleIcon />
                </DlgIconBtn>
              </DlgRow>
              <TagButton>Table Tag Numbering</TagButton>
              <FieldLabel $mt={1}>Reference text object prompt method:</FieldLabel>
              <DlgRow>
                <DlgSelect>
                  Command Line
                  <Chevron />
                </DlgSelect>
              </DlgRow>
              <DlgButtons>
                <DlgButton>Add</DlgButton>
                <DlgButton>Close</DlgButton>
                <DlgButton>Help</DlgButton>
              </DlgButtons>
            </AddLabelsBody>
            <ResizeGrip width="10" height="10" viewBox="0 0 10 10">
              <path d="M0 10L10 0M4 10l6-6M8 10l2-2" stroke="#777" />
            </ResizeGrip>
          </AddLabelsWindow>

          <BearingText>{"S13°15'12\"E"}</BearingText>

          <TaskDialog>
            <TaskTitle>Create Table - Convert Child Styles</TaskTitle>
            <TaskClose width="11" height="11" viewBox="0 0 11 11">
              <path d="M.5.5l10 10M10.5.5l-10 10" stroke="#222" fill="none" />
            </TaskClose>
            <TaskHeading>{"Label styles have been selected that are not in tag\nmode.   What do you want to do?"}</TaskHeading>
            <TaskText>Labels must be in tag mode in order to be included in a table.</TaskText>
            <CommandLink $focus>
              <ArrowBox width="17" height="12" viewBox="0 0 17 12">
                <path d="M0 6h16M11 1l5 5-5 5" fill="none" stroke="#2a4a9a" strokeWidth="1.5" />
              </ArrowBox>
              <div>
                <LinkTitle $c="#1f4190">Convert all selected label styles to tag mode</LinkTitle>
                <LinkSub>This will create a child style in tag mode for each selected label.</LinkSub>
              </div>
            </CommandLink>
            <CommandLink>
              <ArrowBox width="17" height="12" viewBox="0 0 17 12">
                <path d="M0 6h16M11 1l5 5-5 5" fill="none" stroke="#2a6fa8" strokeWidth="1.5" />
              </ArrowBox>
              <LinkTitle $c="#2a7a9e">Don't add labels that are not in tag mode</LinkTitle>
            </CommandLink>
          </TaskDialog>

          <OnLotLines>on LotLines:</OnLotLines>

          <History>
            <HistoryLine>Command: _AeccAddParcelLineTable</HistoryLine>
            <HistoryLine>Select labels on LotLines: 1 found</HistoryLine>
            <HistoryLine>Select labels on LotLines:</HistoryLine>
          </History>

          <CommandBar>
            <CommandTools>
              <CommandGrip />
              <FaTimes />
              <FaWrench />
            </CommandTools>
            <CommandInput>
              <GridIcon w={16} h={15} c="#f2f2f2" />
              <TinyCaret $c="#777" style={{ marginLeft: 2 }} />
              <CommandText>ADDPARCELLINETABLE</CommandText>
              <UpCaret />
            </CommandInput>
          </CommandBar>

          <Pointer width="12" height="18" viewBox="0 0 12 18">
            <path d="M1 1v14l3.5-3.2L7 17l2.5-1-2.4-5H11.5z" fill="#111" stroke="#fff" />
          </Pointer>
        </Canvas>

        <RightBar>
          <GripDots $w={18} />
          {rightTools.map((t, i) =>
            t.kind === "sep" ? (
              <RightSep key={i} />
            ) : (
              <RightSlot key={i} $h={t.h}>
                <RightGlyph kind={t.kind} />
              </RightSlot>
            )
          )}
        </RightBar>
      </Workspace>

      <StatusBar>
        <LayoutTabs>
          <LayoutTab $active>Model</LayoutTab>
          <LayoutTab>Layout1</LayoutTab>
          <LayoutTab>Layout2</LayoutTab>
          <AddLayout>+</AddLayout>
        </LayoutTabs>
        <StatusGroup $w={45}>MODEL</StatusGroup>
        <StatusGroup $w={61}>
          <svg width="13" height="13" viewBox="0 0 13 13">
            <path d="M2 0v13M5 0v13M8 0v13M11 0v13M0 4h13M0 9h13" stroke="#ddd" strokeWidth="0.9" />
          </svg>
          <svg width="13" height="13" viewBox="0 0 13 13">
            <path d="M0 2h13M0 5h13M0 8h13M0 11h13" stroke="#bbb" strokeDasharray="1 2" />
          </svg>
          <StatusCaret />
        </StatusGroup>
        <StatusGroup $w={96}>
          <svg width="13" height="14" viewBox="0 0 13 14">
            <path d="M1 1v12h12M1 8h5v5" fill="none" stroke="#ddd" />
          </svg>
          <svg width="16" height="16" viewBox="0 0 16 16">
            <path d="M14 5a6.5 6.5 0 1 0 1 4H8" fill="none" stroke="#2f8be0" strokeWidth="2.4" />
          </svg>
          <StatusCaret />
          <svg width="14" height="16" viewBox="0 0 14 16">
            <path d="M7 0v6M1 1l12 14M7 10v6" stroke="#bbb" fill="none" />
          </svg>
          <StatusCaret />
        </StatusGroup>
        <StatusGroup $w={60}>
          <svg width="17" height="14" viewBox="0 0 17 14">
            <path d="M1 13h15M1 13L12 2" stroke="#2f8be0" strokeWidth="2" fill="none" />
          </svg>
          <svg width="16" height="16" viewBox="0 0 16 16">
            <rect x="2" y="3" width="11" height="11" fill="none" stroke="#2f8be0" strokeWidth="2" />
            <circle cx="2" cy="3" r="2" fill="#5bd35b" />
          </svg>
          <StatusCaret />
        </StatusGroup>
        <StatusGroup $w={126}>
          <svg width="18" height="18" viewBox="0 0 36 36">
            <path d="M18 3c3 8 3 14 1 18 5 0 10 3 13 9-7-3-11-3-14-3-3 0-7 0-14 3 3-6 8-9 12-9-1-5-1-10 2-18z" fill="#2f8be0" />
          </svg>
          <ScaleAxis s={17} c="#d6d6d6" />
          <ScaleAxis s={16} c="#d6d6d6" />
          <span>1" = 40'</span>
          <StatusCaret />
        </StatusGroup>
        <StatusGroup $w={36}>
          <FaCog style={{ color: "#ccc", fontSize: 13 }} />
          <StatusCaret />
        </StatusGroup>
        <StatusGroup $w={23}>
          <svg width="15" height="15" viewBox="0 0 15 15">
            <path d="M7.5 0v15M0 7.5h15" stroke="#e8e8e8" strokeWidth="1.6" />
          </svg>
        </StatusGroup>
        <StatusGroup $w={23}>
          <svg width="16" height="16" viewBox="0 0 16 16">
            <rect x="1" y="1" width="6" height="6" fill="none" stroke="#ccc" />
            <circle cx="12" cy="5" r="3" fill="none" stroke="#ccc" />
            <path d="M6 9l3 6H3z" fill="none" stroke="#ccc" />
          </svg>
        </StatusGroup>
        <StatusGroup $w={26}>
          <svg width="18" height="18" viewBox="0 0 18 18">
            <circle cx="9" cy="9" r="8" fill="#1d5aa8" stroke="#14447f" />
            <path d="M5 12l1 1 6-6" stroke="#8ebcec" fill="none" />
          </svg>
        </StatusGroup>
        <StatusGroup $w={71}>
          <svg width="16" height="14" viewBox="0 0 16 14">
            <path d="M1 8l7-4 7 3-7 4z" fill="#d2d2d2" />
            <path d="M1 10l7 3 7-3" stroke="#7fae5a" fill="none" strokeWidth="1.4" />
          </svg>
          3.5000
        </StatusGroup>
        <StatusGroup $w={23}>
          <svg width="17" height="15" viewBox="0 0 17 15">
            <path d="M1 9l7-4 8 4-8 5z" fill="#d8cf3a" />
            <path d="M10 13l2 2 5-5" stroke="#55b04a" strokeWidth="1.6" fill="none" />
            <circle cx="6" cy="3" r="2" fill="#6b8fd0" />
          </svg>
        </StatusGroup>
        <StatusGroup $w={22}>
          <svg width="15" height="13" viewBox="0 0 15 13">
            <rect x="0.5" y="0.5" width="14" height="12" fill="none" stroke="#ccc" />
            <path d="M3 10l4-4M3 7v3h3M12 3L8 7M12 6V3H9" stroke="#ccc" fill="none" />
          </svg>
        </StatusGroup>
        <svg width="15" height="13" viewBox="0 0 15 13" style={{ margin: "6px 0 0 1px" }}>
          <path d="M0 1.5h15M0 6.5h15M0 11.5h15" stroke="#e6e6e6" strokeWidth="1.6" />
        </svg>
      </StatusBar>

      <Watermark>
        Linked
        <WatermarkIn>in</WatermarkIn>
      </Watermark>
    </Page>
  );
}
